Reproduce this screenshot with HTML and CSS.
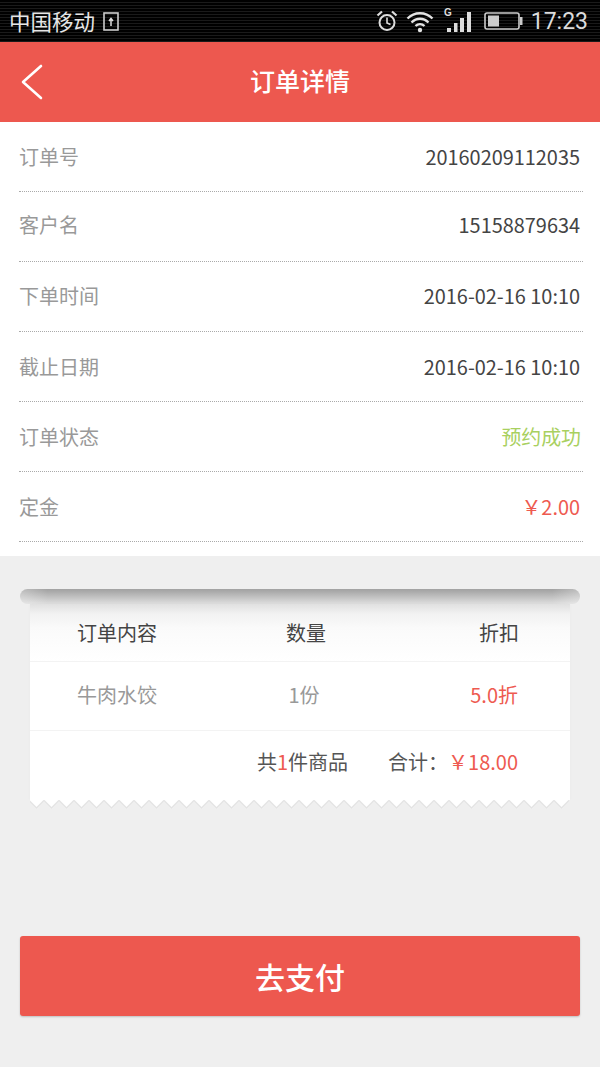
FILE: index.html
```html
<!DOCTYPE html>
<html lang="zh-CN">
<head>
<meta charset="utf-8">
<title>订单详情</title>
<link rel="stylesheet" href="styles.css">
</head>
<body>
<div class="status">
  <div class="status-left">
    <span class="carrier">中国移动</span>
    <svg class="sim" width="16" height="19" viewBox="0 0 16 19"><rect x="1" y="1" width="14" height="17" fill="none" stroke="#ccc" stroke-width="1.600"/><path d="M8 14V6.500M6 9l2-2.500L10 9" fill="none" stroke="#ddd" stroke-width="1.500"/></svg>
  </div>
  <div class="status-right">
    <svg width="22" height="24" viewBox="0 0 22 24"><circle cx="11" cy="13.500" r="7.500" fill="none" stroke="#ddd" stroke-width="2"/><path d="M11 8.500v5.500l3.500 1.500" fill="none" stroke="#ddd" stroke-width="1.600"/><path d="M1.500 6.500L6 2.500M20.500 6.500L16 2.500" stroke="#ddd" stroke-width="2.200"/></svg>
    <svg class="wifi" width="30" height="24" viewBox="0 0 28 24"><path d="M1.500 9.500C8.500 2.500 19.500 2.500 26.500 9.500M5.500 13.500C10.500 8.500 17.500 8.500 22.500 13.500M9.500 17C12 14.500 16 14.500 18.500 17" fill="none" stroke="#e4e4e4" stroke-width="2.400"/><circle cx="14" cy="21" r="2.200" fill="#e4e4e4"/></svg>
    <svg class="signal" width="30" height="28" viewBox="0 0 30 28"><text x="1" y="9" class="g">G</text><path d="M4 25v-4h4v4zM11 25v-9h3.500v9zM17 25V11h4v14zM24 25V5h4v20z" fill="#ddd"/></svg>
    <svg class="battery" width="40" height="18" viewBox="0 0 40 18"><rect x="1" y="1" width="34" height="16" rx="2" fill="none" stroke="#ccc" stroke-width="1.600"/><rect x="4" y="3.500" width="11" height="11" fill="#ccc"/><rect x="36" y="5" width="2.500" height="8" fill="#ccc"/></svg>
    <span class="clock">17:23</span>
  </div>
</div>

<header class="nav">
  <svg class="back" width="24" height="36" viewBox="0 0 24 36"><path d="M21 2L3 18l18 16" fill="none" stroke="#fff" stroke-width="2.600" stroke-linecap="round" stroke-linejoin="round"/></svg>
  <h1 class="title">订单详情</h1>
</header>

<section class="details">
  <div class="row"><span class="label">订单号</span><span class="value">20160209112035</span></div>
  <div class="row raised-2"><span class="label">客户名</span><span class="value">15158879634</span></div>
  <div class="row raised-1"><span class="label">下单时间</span><span class="value">2016-02-16 10:10</span></div>
  <div class="row"><span class="label">截止日期</span><span class="value">2016-02-16 10:10</span></div>
  <div class="row"><span class="label">订单状态</span><span class="value green">预约成功</span></div>
  <div class="row"><span class="label">定金</span><span class="value red">￥2.00</span></div>
</section>

<section class="receipt">
  <div class="roller"></div>
  <div class="paper">
    <div class="cols head"><span>订单内容</span><span class="mid">数量</span><span class="end">折扣</span></div>
    <div class="cols item"><span>牛肉水饺</span><span class="mid">1份</span><span class="end red">5.0折</span></div>
    <div class="total"><span>共<b class="red">1</b>件商品</span><span>合计：<b class="red">￥18.00</b></span></div>
    <svg class="zigzag" width="539" height="10" viewBox="0 0 539 10">
      <defs><pattern id="zz" width="15" height="10" patternUnits="userSpaceOnUse" patternTransform="translate(-1 0)"><path d="M0 0H15V0.500L7.500 8 0 0.500z" fill="#fff"/><path d="M0 1.500L7.500 9 15 1.500" fill="none" stroke="#e3e3e3" stroke-width="1.200"/></pattern></defs>
      <rect width="539" height="10" fill="url(#zz)"/>
    </svg>
  </div>
</section>

<button class="pay">去支付</button>
</body>
</html>
```
FILE: styles.css
```css
* { box-sizing: border-box; }
html, body { margin: 0; padding: 0; }
body {
  width: 600px;
  height: 1067px;
  overflow: hidden;
  background: #efefef;
  font-family: "Noto Sans CJK SC", "Noto Sans", sans-serif;
  font-size: 20px;
}
.status {
  height: 42px;
  display: flex;
  justify-content: space-between;
  align-items: center;
  padding: 0 12px 0 9px;
  color: #e6e6e6;
  background: repeating-linear-gradient(#000 0 2px, #1a1a1a 2px 3px);
}
.status-left, .status-right { display: flex; align-items: center; }
.status-left { gap: 8px; }
.carrier { font-size: 21.5px; line-height: 1; }
.wifi { margin-left: 7px; }
.signal { margin-left: 8px; }
.g { font: bold 10px "Liberation Sans", sans-serif; fill: #ddd; }
.battery { margin-left: 11px; }
.clock { margin-left: 7px; font: 400 23px/1 Roboto, sans-serif; color: #ddd; }
.nav {
  height: 80px;
  padding-bottom: 4px;
  background: #ed584f;
  position: relative;
  display: flex;
  align-items: center;
  justify-content: center;
}
.back { position: absolute; left: 20px; top: 22px; }
.title { margin: 0; font-size: 25px; font-weight: 500; color: #fff; }
.details {
  background: #fff;
  padding: 0 17px 14px 19px;
}
.row {
  height: 70px;
  display: flex;
  justify-content: space-between;
  align-items: center;
  border-bottom: 1px dotted #aaa;
  padding-right: 3px;
}
.raised-2 { padding-bottom: 4px; }
.raised-1 { padding-bottom: 2px; }
.label { color: #999; }
.value { color: #444; font-size: 19.9px; }
.green { color: #a9d05f; margin-right: -1px; }
.red { color: #ee5a50; font-weight: 400; }
.receipt {
  margin-top: 33px;
  padding: 0 20px;
  height: 220px;
}
.roller {
  height: 15px;
  border-radius: 8px;
  background:
    linear-gradient(90deg, rgba(255,255,255,.3), rgba(255,255,255,0) 5%, rgba(255,255,255,0) 95%, rgba(255,255,255,.3)),
    linear-gradient(#a2a2a2, #a8a8a8 2px, #dedede);
}
.paper {
  position: relative;
  margin: 0 10px;
  height: 196px;
  background: #fff;
  box-shadow: -1px 0 2px rgba(0,0,0,.015), 1px 0 2px rgba(0,0,0,.015);
}
.cols {
  display: grid;
  grid-template-columns: 160px 134px 1fr;
  align-items: center;
  padding: 0 52px 0 47px;
  border-bottom: 1px solid #f3f3f3;
}
.head {
  height: 58px;
  color: #444;
  grid-template-columns: 162px 134px 1fr;
  padding-right: 51px;
  background: linear-gradient(#e0e0e0 0, #f2f2f2 10px, #fafafa 24px, #fff 58px);
}
.item { height: 69px; padding-bottom: 3px; color: #999; }
.mid { text-align: center; }
.end { text-align: right; }
.total {
  height: 62px;
  padding-bottom: 1px;
  display: flex;
  justify-content: flex-end;
  align-items: center;
  gap: 40px;
  padding-right: 52px;
  color: #555;
}
.zigzag { position: absolute; left: 0; top: 195px; display: block; }
.pay {
  display: block;
  width: 560px;
  height: 80px;
  margin: 127px 0 0 20px;
  padding: 0;
  border: 0;
  border-radius: 3px;
  background: #ed584f;
  box-shadow: 0 1px 2px rgba(0,0,0,.2);
  color: #fff;
  font: 500 30px "Noto Sans CJK SC", sans-serif;
}
```
